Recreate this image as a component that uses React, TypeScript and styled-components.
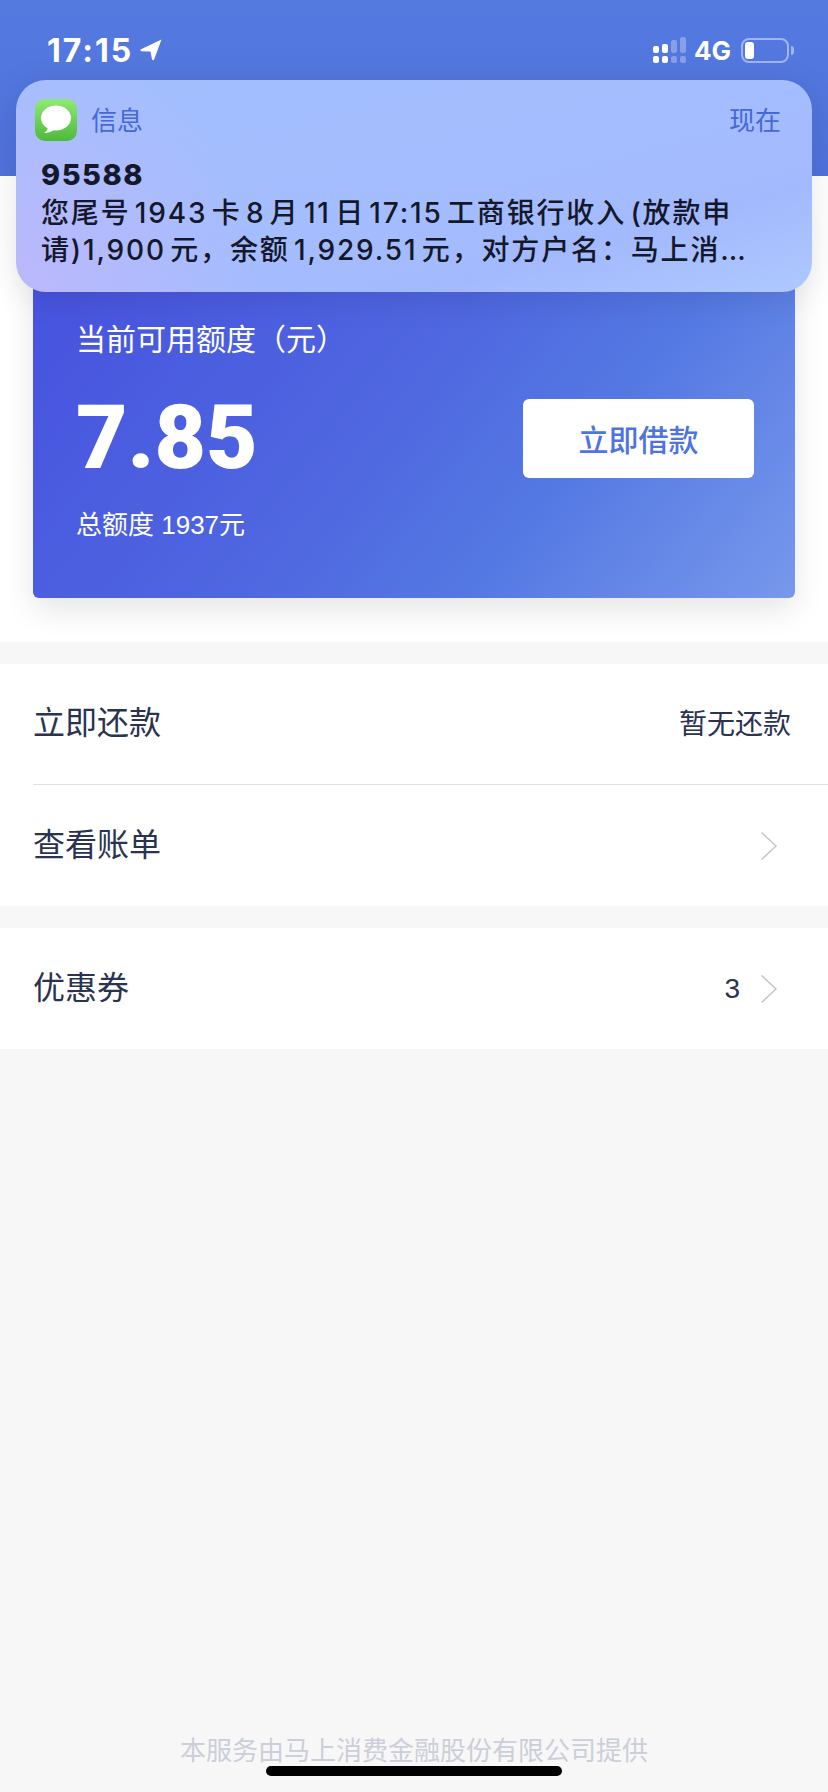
import React from "react"
import styled, { createGlobalStyle } from "styled-components"

const GlobalStyle = createGlobalStyle`
  html, body {
    margin: 0;
    padding: 0;
    background: #f7f7f7;
  }
  * {
    box-sizing: border-box;
  }
`

const Page = styled.div`
  background: #f7f7f7;
  display: flex;
  flex-direction: column;
  font-family: "Liberation Sans", "Noto Sans CJK SC", sans-serif;
  height: 1792px;
  overflow: hidden;
  position: relative;
  text-spacing-trim: space-all;
  width: 828px;
`

const Header = styled.header`
  background: linear-gradient(180deg, #547ae0 0%, #4f72dc 100%);
  display: flex;
  height: 176px;
  justify-content: space-between;
  padding: 30px 39px 0 47px;
`

const Clock = styled.div`
  align-items: center;
  color: #fff;
  display: flex;
  font-family: Inter, sans-serif;
  font-size: 32px;
  font-weight: 700;
  gap: 7px;
  height: 40px;
  letter-spacing: 2px;
`

const StatusIcons = styled.div`
  align-items: center;
  display: flex;
  height: 40px;
`

const NetworkLabel = styled.span`
  color: #fff;
  font-family: Inter, sans-serif;
  font-size: 26px;
  font-weight: 700;
  margin: 0 10px 0 7px;
`

const Battery = styled.div`
  border: 2px solid rgba(255, 255, 255, 0.45);
  border-radius: 8px;
  height: 25px;
  padding: 2px;
  position: relative;
  width: 48px;

  &::before {
    background: #fff;
    border-radius: 3px;
    content: "";
    display: block;
    height: 17px;
    width: 9px;
  }

  &::after {
    background: rgba(255, 255, 255, 0.45);
    border-radius: 0 3px 3px 0;
    content: "";
    height: 9px;
    position: absolute;
    right: -7px;
    top: 6px;
    width: 3px;
  }
`

const Notification = styled.aside`
  background:
    radial-gradient(circle at 0% 100%, #bcb8fc 0%, rgba(188, 184, 252, 0) 30%),
    linear-gradient(165deg, #a3bffe 0%, #a4bdfe 55%, #a3b9fd 75%, #aec9ff 100%);
  border-radius: 30px;
  box-shadow: 0 6px 34px rgba(0, 0, 0, 0.1);
  height: 212px;
  left: 16px;
  padding: 19px 31px 0 19px;
  position: absolute;
  top: 80px;
  width: 796px;
  z-index: 2;
`

const NotificationHead = styled.div`
  align-items: center;
  color: #4569d8;
  display: flex;
  font-size: 26px;
  height: 42px;
  justify-content: space-between;
`

const HeadText = styled.span`
  padding-bottom: 4px;
`

const AppName = styled.div`
  align-items: center;
  display: flex;
  gap: 14px;
`

const AppIcon = styled.div`
  align-items: center;
  background: linear-gradient(180deg, #8eea72 0%, #4eb93c 100%);
  border-radius: 10px;
  display: flex;
  height: 42px;
  justify-content: center;
  width: 42px;
`

const Sender = styled.div`
  color: #14182a;
  font-family: Inter, sans-serif;
  font-size: 29px;
  font-weight: 800;
  letter-spacing: 1.5px;
  line-height: 36px;
  margin: 16px 0 2px 6px;
`

const MessageLine = styled.div`
  color: #14182a;
  font-family: Inter, "Noto Sans CJK SC", sans-serif;
  font-size: 28px;
  font-weight: 500;
  height: 37px;
  letter-spacing: 1.85px;
  line-height: 37px;
  margin-left: 6px;
  white-space: nowrap;
  word-spacing: -5px;
`

const QuotaSection = styled.section`
  background: #fff;
  padding: 24px 33px 44px;
`

const QuotaCard = styled.div`
  background: linear-gradient(128deg, #4650df 0%, #4f67e0 48%, #5479e3 70%, #7898ec 100%);
  border-radius: 6px;
  box-shadow: 0 12px 30px rgba(0, 0, 0, 0.1);
  color: #fff;
  height: 398px;
  padding: 118px 41px 0 43px;
`

const QuotaTitle = styled.div`
  font-size: 30px;
  line-height: 44px;
`

const QuotaRow = styled.div`
  align-items: center;
  display: flex;
  justify-content: space-between;
  margin-top: 26px;
`

const QuotaAmount = styled.div`
  font-family: Roboto, sans-serif;
  font-size: 89px;
  font-weight: 900;
  line-height: 100px;
`

const BorrowButton = styled.button`
  background: #fff;
  border: 0;
  border-radius: 6px;
  color: #4e74e0;
  font-family: "Noto Sans CJK SC", sans-serif;
  font-size: 30px;
  font-weight: 500;
  height: 79px;
  width: 231px;
`

const QuotaTotal = styled.div`
  font-size: 26px;
  line-height: 36px;
  margin-top: 19px;
`

const ListGroup = styled.div`
  background: #fff;
  margin-top: 22px;
  padding-left: 33px;
`

const Row = styled.div<{ $divider?: boolean; $arrow?: boolean }>`
  align-items: center;
  border-bottom: ${(props) => (props.$divider ? "1px solid #e2e2e6" : "0")};
  color: #2a3350;
  display: flex;
  height: 121px;
  justify-content: space-between;
  padding-right: ${(props) => (props.$arrow ? "50px" : "37px")};
`

const RowLabel = styled.span`
  font-size: 32px;
  padding-bottom: 8px;
`

const RowStatus = styled.span`
  font-size: 28px;
  padding-bottom: 4px;
`

const RowValue = styled.span`
  align-items: center;
  display: flex;
  font-size: 28px;
  gap: 20px;
`

const Footer = styled.footer`
  color: #ccced9;
  font-size: 26px;
  line-height: 36px;
  margin-top: auto;
  padding-bottom: 23px;
  text-align: center;
`

const HomeIndicator = styled.div`
  background: #000;
  border-radius: 5px;
  bottom: 16px;
  height: 10px;
  left: 266px;
  position: absolute;
  width: 296px;
`

const Chevron = (): JSX.Element => (
  <svg width="18" height="30" viewBox="0 0 18 30" fill="none">
    <path d="M1.5 1.5 L16 15 L1.5 28.5" stroke="#c3c3d1" strokeWidth="1.4" />
  </svg>
)

const LocationArrow = (): JSX.Element => (
  <svg width="22" height="22" viewBox="0 0 22 22" fill="#fff">
    <path d="M21.5 0.5 L0.5 10.5 Q0 12 1.5 12.2 L10.5 12.4 L12 20.5 Q13 22 14 20.8 Z" />
  </svg>
)

const SignalBars = (): JSX.Element => (
  <svg width="34" height="27" viewBox="0 0 34 27">
    <g fill="#fff">
      <rect x="0" y="9" width="6" height="7" rx="2" />
      <rect x="0" y="19" width="6" height="7" rx="2" />
      <rect x="9" y="7" width="6" height="9" rx="2" />
      <rect x="9" y="19" width="6" height="7" rx="2" />
    </g>
    <g fill="#fff" fillOpacity="0.3">
      <rect x="18" y="3" width="6" height="13" rx="2" />
      <rect x="18" y="19" width="6" height="7" rx="2" />
      <rect x="27" y="0" width="6" height="16" rx="2" />
      <rect x="27" y="19" width="6" height="7" rx="2" />
    </g>
  </svg>
)

const MessageBubble = (): JSX.Element => (
  <svg width="32" height="30" viewBox="0 0 32 30" fill="#fff">
    <ellipse cx="16" cy="13" rx="15" ry="12.5" />
    <path d="M8 21 Q8 26 4 28 Q11 28 15 24 Z" />
  </svg>
)

const App = (): JSX.Element => {
  return (
    <Page>
      <GlobalStyle />
      <Header>
        <Clock>
          17:15
          <LocationArrow />
        </Clock>
        <StatusIcons>
          <SignalBars />
          <NetworkLabel>4G</NetworkLabel>
          <Battery />
        </StatusIcons>
      </Header>

      <Notification>
        <NotificationHead>
          <AppName>
            <AppIcon>
              <MessageBubble />
            </AppIcon>
            <HeadText>信息</HeadText>
          </AppName>
          <HeadText>现在</HeadText>
        </NotificationHead>
        <Sender>95588</Sender>
        <MessageLine>您尾号 1943 卡 8 月 11 日 17:15 工商银行收入 (放款申</MessageLine>
        <MessageLine>请)1,900 元，余额 1,929.51 元，对方户名：马上消…</MessageLine>
      </Notification>

      <QuotaSection>
        <QuotaCard>
          <QuotaTitle>当前可用额度（元）</QuotaTitle>
          <QuotaRow>
            <QuotaAmount>7.85</QuotaAmount>
            <BorrowButton>立即借款</BorrowButton>
          </QuotaRow>
          <QuotaTotal>总额度 1937元</QuotaTotal>
        </QuotaCard>
      </QuotaSection>

      <ListGroup>
        <Row $divider>
          <RowLabel>立即还款</RowLabel>
          <RowStatus>暂无还款</RowStatus>
        </Row>
        <Row $arrow>
          <RowLabel>查看账单</RowLabel>
          <RowValue>
            <Chevron />
          </RowValue>
        </Row>
      </ListGroup>

      <ListGroup>
        <Row $arrow>
          <RowLabel>优惠券</RowLabel>
          <RowValue>
            3
            <Chevron />
          </RowValue>
        </Row>
      </ListGroup>

      <Footer>本服务由马上消费金融股份有限公司提供</Footer>
      <HomeIndicator />
    </Page>
  )
}

export default App
